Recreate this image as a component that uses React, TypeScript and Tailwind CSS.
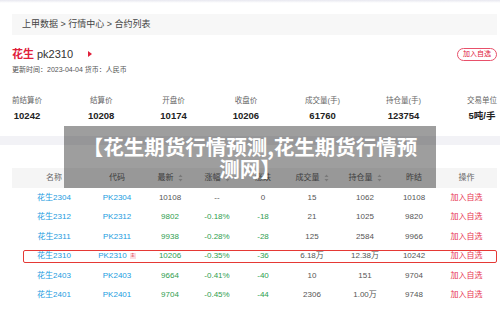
import React from "react";

interface Contract {
  name: string;
  code: string;
  last: string;
  pct: string;
  chg: string;
  vol: string;
  oi: string;
  prev: string;
  down: boolean;
  main?: boolean;
}

const rows: Contract[] = [
  { name: "花生2304", code: "PK2304", last: "10108", pct: "--", chg: "0", vol: "15", oi: "1062", prev: "10108", down: false },
  { name: "花生2312", code: "PK2312", last: "9802", pct: "-0.18%", chg: "-18", vol: "21", oi: "1025", prev: "9820", down: true },
  { name: "花生2311", code: "PK2311", last: "9938", pct: "-0.28%", chg: "-28", vol: "125", oi: "2584", prev: "9966", down: true },
  { name: "花生2310", code: "PK2310", last: "10206", pct: "-0.35%", chg: "-36", vol: "6.18万", oi: "12.38万", prev: "10242", down: true, main: true },
  { name: "花生2403", code: "PK2403", last: "9664", pct: "-0.41%", chg: "-40", vol: "10", oi: "151", prev: "9704", down: true },
  { name: "花生2401", code: "PK2401", last: "9704", pct: "-0.45%", chg: "-44", vol: "2306", oi: "1.00万", prev: "9748", down: true },
];

const stats = [
  { label: "前结算价", value: "10242" },
  { label: "结算价", value: "10208" },
  { label: "开盘价", value: "10174" },
  { label: "收盘价", value: "10206" },
  { label: "成交量(手)", value: "61760" },
  { label: "持仓量(手)", value: "123754" },
  { label: "交易单位", value: "5吨/手" },
];

const cols = "grid grid-cols-[76px_58px_48px_46px_46px_52px_54px_44px_61px] items-center text-center";

function SortIcon() {
  return (
    <svg width="5" height="8" viewBox="0 0 5 8" className="ml-[4px] inline-block">
      <path d="M2.5 0.5 L4.5 3 L0.5 3 Z" fill="#c4c4c4" />
      <path d="M2.5 7.5 L4.5 5 L0.5 5 Z" fill="#c4c4c4" />
    </svg>
  );
}

export default function App() {
  return (
    <div
      className="relative w-[500px] h-[315px] overflow-hidden bg-white"
      style={{ fontFamily: '"Liberation Sans", "Noto Sans CJK SC", sans-serif' }}
    >
      {/* top shadow */}
      <div className="h-[3px] bg-gradient-to-b from-[#e8e8f0] to-white" />

      <div className="pl-[12px] pr-[3px]">
        {/* Breadcrumb */}
        <div className="mt-[11px] h-[21px] bg-[#f7f7f7] flex items-center pl-[10px] text-[9px] text-[#444]">
          上甲数据 &gt; 行情中心 &gt; 合约列表
        </div>

        {/* Title */}
        <div className="mt-[11px] h-[16px] flex items-center justify-between">
          <div className="flex items-center text-[11px] leading-none">
            <span className="text-[#e0203a] font-bold">花生</span>
            <span className="ml-[3px] text-[#333]">pk2310</span>
            <svg width="4" height="6" viewBox="0 0 4 6" className="ml-[15px]">
              <path d="M0 0 L4 3 L0 6 Z" fill="#e0203a" />
            </svg>
          </div>
          <div className="h-[13px] px-[5px] rounded-full border border-[#e8506a] text-[#e0203a] text-[7px] flex items-center">
            加入自选
          </div>
        </div>
        <div className="mt-[3px] h-[10px] flex items-center text-[7px] text-[#555]">
          更新时间：2023-04-04 货币：人民币
        </div>

        {/* Stats */}
        <div className="mt-[21px] flex justify-between">
          {stats.map((s) => (
            <div key={s.label} className="flex flex-col items-center">
              <div className="h-[10px] flex items-center text-[7.5px] text-[#666]">{s.label}</div>
              <div className="mt-[4px] h-[12px] flex items-center text-[9.5px] font-bold text-[#222]">{s.value}</div>
            </div>
          ))}
        </div>
      </div>

      {/* separator band */}
      <div className="mt-[14px] h-[9px] bg-[#f2f2f6]" />

      {/* Table */}
      <div className="mt-[23px] pl-[12px] pr-[3px] text-[8px]">
        <div className={`${cols} h-[20px] bg-[#f5f5f5] text-[#666]`}>
          <div className="pl-[8px]">名称</div>
          <div>代码</div>
          <div className="flex items-center justify-center">最新<SortIcon /></div>
          <div className="flex items-center justify-center">涨幅<SortIcon /></div>
          <div>涨跌</div>
          <div className="flex items-center justify-center">成交量<SortIcon /></div>
          <div className="flex items-center justify-center">持仓量<SortIcon /></div>
          <div>昨结</div>
          <div>操作</div>
        </div>
        {rows.map((r) => {
          const c = r.down ? "text-[#2f9e4f]" : "text-[#555]";
          return (
            <div key={r.code} className={`${cols} relative h-[19.5px] text-[#555]`}>
              {r.main && (
                <div className="absolute left-[11px] right-0 top-[3.5px] bottom-[3px] border border-[#e53935] rounded-[2px]" />
              )}
              <div className="pl-[8px] text-[#1a9be0]">{r.name}</div>
              <div className="text-[#1a9be0] flex items-center justify-center">
                {r.code}
                {r.main && (
                  <span className="ml-[3px] w-[6px] h-[6px] bg-[#fbdde2] text-[#e0203a] text-[4px] leading-[6px] text-center">
                    主
                  </span>
                )}
              </div>
              <div className={c}>{r.last}</div>
              <div className={c}>{r.pct}</div>
              <div className={c}>{r.chg}</div>
              <div>{r.vol}</div>
              <div>{r.oi}</div>
              <div>{r.prev}</div>
              <div className="text-[#e8364f]">加入自选</div>
            </div>
          );
        })}
      </div>

      {/* watermark overlay */}
      <div className="absolute left-[64px] top-[126px] w-[372px] h-[62px] bg-black/[0.38] flex flex-col items-center justify-center text-white font-bold text-[20.5px] leading-[22px]">
        <div style={{ fontFamily: '"Noto Sans CJK SC", sans-serif' }}>【花生期货行情预测,花生期货行情预</div>
        <div style={{ fontFamily: '"Noto Sans CJK SC", sans-serif' }}>测网】</div>
      </div>
    </div>
  );
}
